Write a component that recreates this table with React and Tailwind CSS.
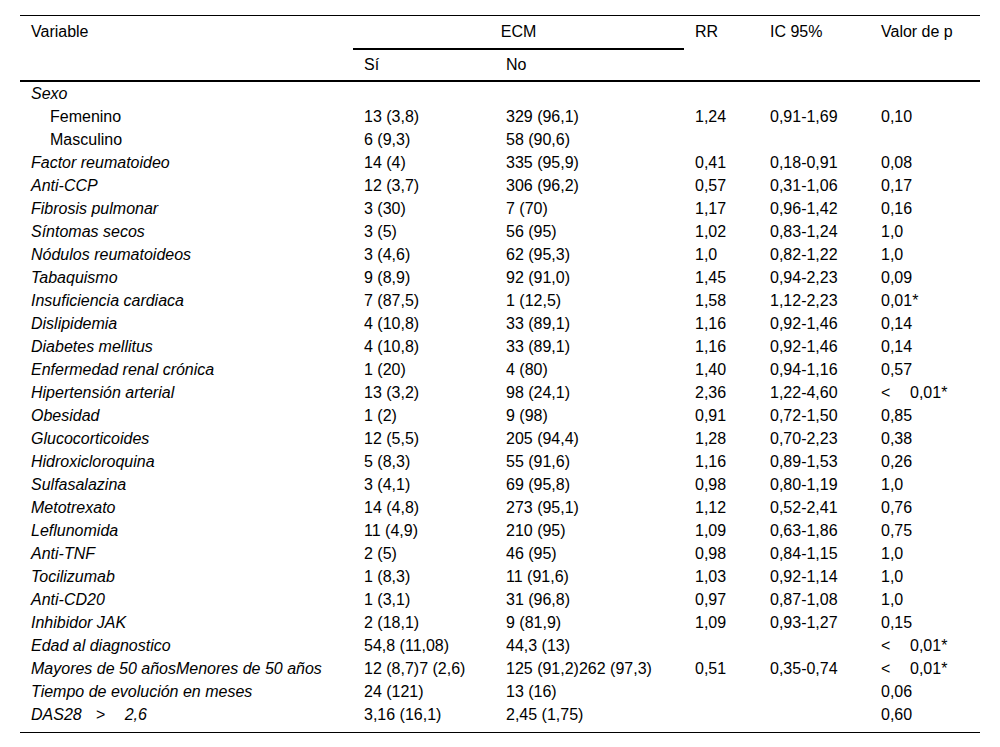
import React from "react";

const rows = [
  ["Sexo", "", "", "", "", ""],
  ["Femenino", "13 (3,8)", "329 (96,1)", "1,24", "0,91-1,69", "0,10", true],
  ["Masculino", "6 (9,3)", "58 (90,6)", "", "", "", true],
  ["Factor reumatoideo", "14 (4)", "335 (95,9)", "0,41", "0,18-0,91", "0,08"],
  ["Anti-CCP", "12 (3,7)", "306 (96,2)", "0,57", "0,31-1,06", "0,17"],
  ["Fibrosis pulmonar", "3 (30)", "7 (70)", "1,17", "0,96-1,42", "0,16"],
  ["Síntomas secos", "3 (5)", "56 (95)", "1,02", "0,83-1,24", "1,0"],
  ["Nódulos reumatoideos", "3 (4,6)", "62 (95,3)", "1,0", "0,82-1,22", "1,0"],
  ["Tabaquismo", "9 (8,9)", "92 (91,0)", "1,45", "0,94-2,23", "0,09"],
  ["Insuficiencia cardiaca", "7 (87,5)", "1 (12,5)", "1,58", "1,12-2,23", "0,01*"],
  ["Dislipidemia", "4 (10,8)", "33 (89,1)", "1,16", "0,92-1,46", "0,14"],
  ["Diabetes mellitus", "4 (10,8)", "33 (89,1)", "1,16", "0,92-1,46", "0,14"],
  ["Enfermedad renal crónica", "1 (20)", "4 (80)", "1,40", "0,94-1,16", "0,57"],
  ["Hipertensión arterial", "13 (3,2)", "98 (24,1)", "2,36", "1,22-4,60", "LT"],
  ["Obesidad", "1 (2)", "9 (98)", "0,91", "0,72-1,50", "0,85"],
  ["Glucocorticoides", "12 (5,5)", "205 (94,4)", "1,28", "0,70-2,23", "0,38"],
  ["Hidroxicloroquina", "5 (8,3)", "55 (91,6)", "1,16", "0,89-1,53", "0,26"],
  ["Sulfasalazina", "3 (4,1)", "69 (95,8)", "0,98", "0,80-1,19", "1,0"],
  ["Metotrexato", "14 (4,8)", "273 (95,1)", "1,12", "0,52-2,41", "0,76"],
  ["Leflunomida", "11 (4,9)", "210 (95)", "1,09", "0,63-1,86", "0,75"],
  ["Anti-TNF", "2 (5)", "46 (95)", "0,98", "0,84-1,15", "1,0"],
  ["Tocilizumab", "1 (8,3)", "11 (91,6)", "1,03", "0,92-1,14", "1,0"],
  ["Anti-CD20", "1 (3,1)", "31 (96,8)", "0,97", "0,87-1,08", "1,0"],
  ["Inhibidor JAK", "2 (18,1)", "9 (81,9)", "1,09", "0,93-1,27", "0,15"],
  ["Edad al diagnostico", "54,8 (11,08)", "44,3 (13)", "", "", "LT"],
  ["Mayores de 50 añosMenores de 50 años", "12 (8,7)7 (2,6)", "125 (91,2)262 (97,3)", "0,51", "0,35-0,74", "LT"],
  ["Tiempo de evolución en meses", "24 (121)", "13 (16)", "", "", "0,06"],
  ["DAS", "3,16 (16,1)", "2,45 (1,75)", "", "", "0,60"],
];

function Pval({ v }) {
  if (v === "LT")
    return (
      <span>
        <span className="inline-block w-[29px]">&lt;</span>0,01*
      </span>
    );
  return v;
}

function Label({ v, sub }) {
  if (v === "DAS")
    return (
      <span className="italic">
        DAS28<span className="inline-block ml-[14px] w-[29px]">&gt;</span>2,6
      </span>
    );
  if (sub) return <span className="pl-[19px]">{v}</span>;
  return <span className="italic">{v}</span>;
}

export default function App() {
  return (
    <div
      className="w-[1000px] h-[747px] bg-white pt-[15px] px-[20px] text-black text-[16px]"
      style={{ fontFamily: '"Liberation Sans", Arial, sans-serif' }}
    >
      <table className="w-[960px] table-fixed border-collapse">
        <colgroup>
          <col className="w-[333px]" />
          <col className="w-[142px]" />
          <col className="w-[189px]" />
          <col className="w-[75px]" />
          <col className="w-[111px]" />
          <col className="w-[110px]" />
        </colgroup>
        <thead>
          <tr className="border-t border-black h-[33px]">
            <th className="font-normal text-left pl-[11px] align-middle">Variable</th>
            <th colSpan={2} className="font-normal text-center align-middle border-b-2 border-black">
              ECM
            </th>
            <th className="font-normal text-left pl-[11px] align-middle">RR</th>
            <th className="font-normal text-left pl-[11px] align-middle">IC 95%</th>
            <th className="font-normal text-left pl-[11px] align-middle">Valor de p</th>
          </tr>
          <tr className="border-b-2 border-black h-[32px]">
            <th></th>
            <th className="font-normal text-left pl-[11px] align-middle">Sí</th>
            <th className="font-normal text-left pl-[11px] align-middle">No</th>
            <th></th>
            <th></th>
            <th></th>
          </tr>
        </thead>
        <tbody className="leading-[23px]">
          {rows.map((r, i) => {
            const last = i === rows.length - 1;
            const pad = last ? "pb-[6px]" : "";
            return (
              <tr key={i} className={last ? "border-b border-black" : ""}>
                <td className={`pl-[11px] whitespace-nowrap ${pad}`}>
                  <Label v={r[0]} sub={r[6]} />
                </td>
                <td className={`pl-[11px] whitespace-nowrap ${pad}`}>{r[1]}</td>
                <td className={`pl-[11px] whitespace-nowrap ${pad}`}>{r[2]}</td>
                <td className={`pl-[11px] whitespace-nowrap ${pad}`}>{r[3]}</td>
                <td className={`pl-[11px] whitespace-nowrap ${pad}`}>{r[4]}</td>
                <td className={`pl-[11px] whitespace-nowrap ${pad}`}>
                  <Pval v={r[5]} />
                </td>
              </tr>
            );
          })}
        </tbody>
      </table>
    </div>
  );
}
